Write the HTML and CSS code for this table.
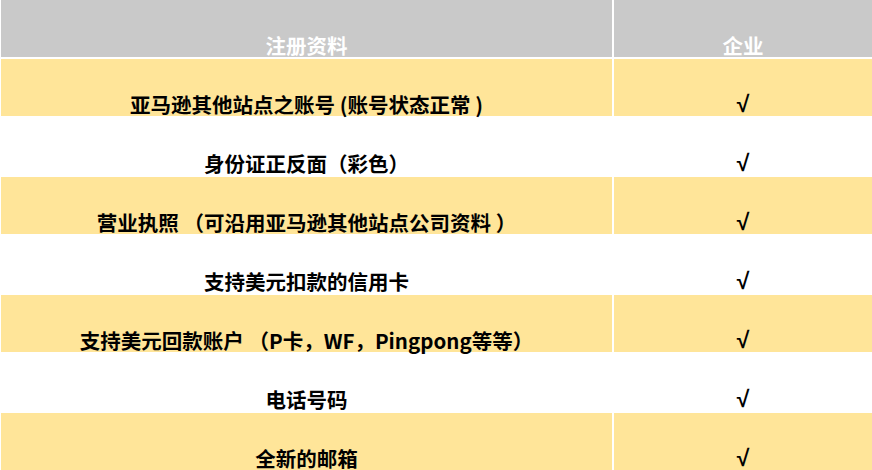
FILE: index.html
```html
<!DOCTYPE html>
<html lang="zh-CN">
<head>
<meta charset="utf-8">
<title>注册资料</title>
<link rel="stylesheet" href="styles.css">
</head>
<body>
<div class="sheet">
  <div class="cell head">注册资料</div>
  <div class="cell head">企业</div>

  <div class="cell yellow">亚马逊其他站点之账号 (账号状态正常 )</div>
  <div class="cell yellow check">√</div>

  <div class="cell">身份证正反面（彩色）</div>
  <div class="cell check">√</div>

  <div class="cell yellow">营业执照 （可沿用亚马逊其他站点公司资料 ）</div>
  <div class="cell yellow check">√</div>

  <div class="cell">支持美元扣款的信用卡</div>
  <div class="cell check">√</div>

  <div class="cell yellow">支持美元回款账户 （P卡，WF，Pingpong等等）</div>
  <div class="cell yellow check">√</div>

  <div class="cell">电话号码</div>
  <div class="cell check">√</div>

  <div class="cell yellow">全新的邮箱</div>
  <div class="cell yellow check">√</div>
</div>
</body>
</html>
```

FILE: styles.css
```css
html, body {
  margin: 0;
  padding: 0;
  background: #ffffff;
}

body {
  font-family: "Noto Sans CJK SC", "Liberation Sans", sans-serif;
  font-weight: 700;
  font-size: 20.5px;
  color: #000000;
  overflow: hidden;
}

.sheet {
  display: grid;
  grid-template-columns: 611px 1fr;
  grid-template-rows: repeat(8, 57px);
  column-gap: 2px;
  row-gap: 2px;
  padding-left: 1px;
  width: 872px;
  box-sizing: border-box;
}

.cell {
  display: flex;
  align-items: flex-end;
  justify-content: center;
  line-height: 24px;
  white-space: pre;
}

.head {
  background: #c9c9c9;
  color: #ffffff;
}

.yellow {
  background: #ffe599;
}

.check {
  font-family: "Liberation Sans", "DejaVu Sans", sans-serif;
  font-size: 23px;
  padding-bottom: 0;
}
```
